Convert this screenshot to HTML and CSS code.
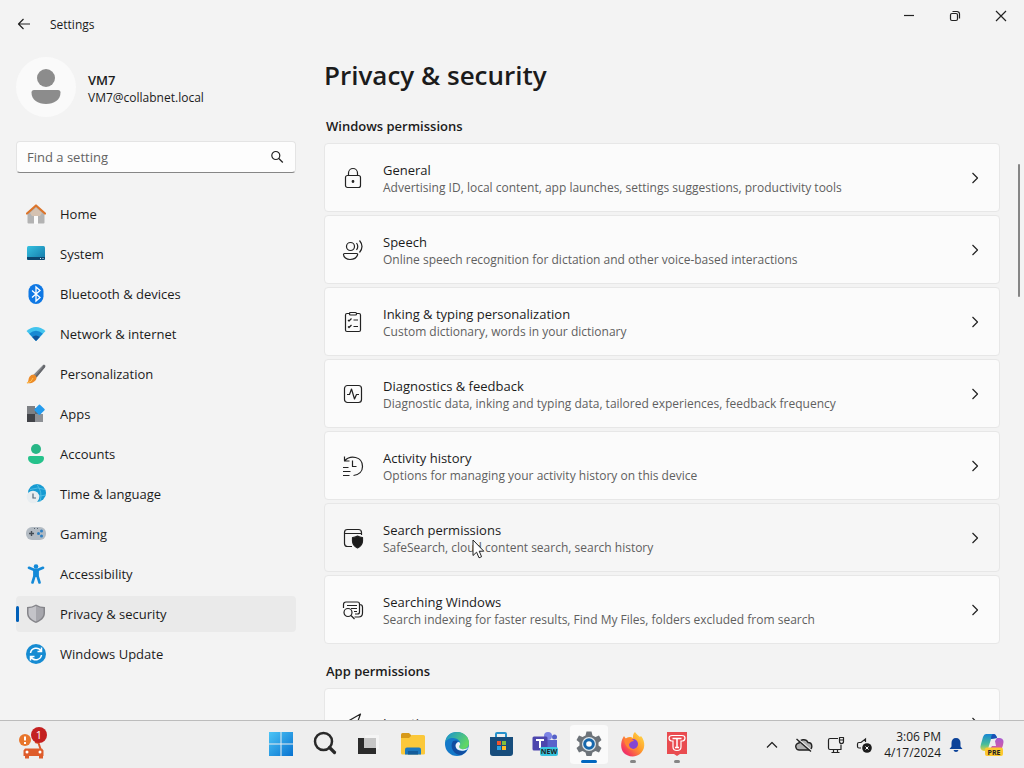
FILE: index.html
```html
<!DOCTYPE html>
<html lang="en">
<head>
<meta charset="UTF-8" />
<meta name="viewport" content="width=device-width, initial-scale=1" />
<title>Settings</title>
<link rel="stylesheet" href="styles.css">
</head>
<body>

<header class="titlebar">
  <button class="back" aria-label="Back">
    <svg width="16" height="16" viewBox="0 0 16 16" class="line"><path d="M14 8H2.500M7.500 3l-5 5 5 5"/></svg>
  </button>
  <span class="app-name">Settings</span>
  <div class="window-buttons">
    <button aria-label="Minimize"><svg width="12" height="12" viewBox="0 0 12 12" class="line"><path d="M1 5.500h10"/></svg></button>
    <button aria-label="Restore"><svg width="12" height="12" viewBox="0 0 12 12" class="line"><rect x="1.500" y="3.500" width="7" height="7" rx="1.500"/><path d="M3.500 1.500H8a2.500 2.500 0 0 1 2.500 2.500v4.500"/></svg></button>
    <button aria-label="Close"><svg width="12" height="12" viewBox="0 0 12 12" class="line"><path d="M1 1l10 10M11 1L1 11"/></svg></button>
  </div>
</header>

<div class="window">
  <aside class="sidebar">
    <div class="profile">
      <div class="avatar">
        <svg width="60" height="60" viewBox="0 0 60 60"><circle cx="30" cy="21" r="9" fill="#8c8c8c"/><path d="M18 33h24q2.500 0 2.500 2.500C44.500 43 38 47 30 47s-14.500-4-14.500-11.500Q15.500 33 18 33z" fill="#8c8c8c"/></svg>
      </div>
      <div class="user">
        <div class="user-name">VM7</div>
        <div class="user-mail">VM7@collabnet.local</div>
      </div>
    </div>

    <div class="search">
      <input type="text" id="find" placeholder="Find a setting" aria-label="Find a setting" />
      <svg width="14" height="14" viewBox="0 0 14 14" class="line"><circle cx="5.800" cy="5.500" r="4"/><path d="M8.800 8.500l4 4"/></svg>
    </div>

    <nav class="nav">
      <a href="#home">
        <svg width="20" height="20" viewBox="0 0 20 20"><path d="M1.500 9L10 2l8.500 7v9.500a1 1 0 0 1-1 1H12v-6H8v6H2.500a1 1 0 0 1-1-1z" fill="#b3b3b3"/><path d="M4 9l6-5.500L16 9l-2 3H6z" fill="#d5c2b1"/><path d="M1 9.500L10 1.500l9 8" fill="none" stroke="#dc742a" stroke-width="2.200" stroke-linecap="round" stroke-linejoin="round"/><path d="M8 12h4v8H8z" fill="#fbfbfb"/></svg>
        Home
      </a>
      <a href="#system">
        <svg width="20" height="20" viewBox="0 0 20 20"><defs><linearGradient id="sys" x2="1" y2="1"><stop stop-color="#35c1e0"/><stop offset="1" stop-color="#1377a8"/></linearGradient></defs><rect x="1" y="2" width="18" height="14" rx="1.500" fill="url(#sys)"/><path d="M1 13h18v1.500q0 1.500-1.500 1.500h-15Q1 16 1 14.500z" fill="#0c4770"/><path d="M14 14.500h1M16.500 14.500h1" stroke="#dceffb"/></svg>
        System
      </a>
      <a href="#bluetooth">
        <svg width="20" height="20" viewBox="0 0 20 20"><rect x="2.500" width="15" height="20" rx="7.500" fill="#0f78e4"/><path d="M6 6.500l8 7-4 3.500V3l4 3.500-8 7" fill="none" stroke="#fff" stroke-width="1.300"/></svg>
        Bluetooth &amp; devices
      </a>
      <a href="#network">
        <svg width="20" height="20" viewBox="0 0 20 20"><path d="M.5 7q9.500-8 19 0L10.500 16.500q-.5.5-1 0z" fill="#42c4ee"/><path d="M3.200 9.700q6.800-5.700 13.600 0l-6.300 6.800q-.5.5-1 0z" fill="#1789d3"/><path d="M6.200 12.900q3.800-3 7.600 0l-3.300 3.600q-.5.5-1 0z" fill="#10549b"/></svg>
        Network &amp; internet
      </a>
      <a href="#personalization">
        <svg width="20" height="20" viewBox="0 0 20 20"><path d="M18.500.7q1.500.8.500 2.500l-8.500 10.300-3-2.800L17 1q.8-.8 1.500-.3z" fill="#85888d"/><path d="M16 4l1.500-3q2.500 0 1.500 2.200l-8.500 10.300-1.500-1.300z" fill="#65676c"/><path d="M7.500 10.500q2.800.6 3 3.500C10 18 5 20 .5 19c2.500-1 1.500-4 3-6.300q1.600-2.200 4-2.200z" fill="#ed8b27"/><path d="M1 19q5-1 6-5" fill="none" stroke="#ffc252"/></svg>
        Personalization
      </a>
      <a href="#apps">
        <svg width="20" height="20" viewBox="0 0 20 20"><path d="M1 2h8v8H1z" fill="#7d8084"/><path d="M1 10h8v8H1z" fill="#414348"/><path d="M9 10h8v8H9z" fill="#8d9095"/><path d="M9 4h6v6H9z" fill="#65686c"/><path d="M14 .7l4.500 4.300q.6.600 0 1.200L14 10.700q-.6.600-1.200 0L8.600 6.500q-.5-.7 0-1.300L12.900.7q.5-.5 1.100 0z" fill="#249bed"/></svg>
        Apps
      </a>
      <a href="#accounts">
        <svg width="20" height="20" viewBox="0 0 20 20"><circle cx="10" cy="5" r="5" fill="#27b686"/><path d="M4 12h12q2 0 2 2c0 4-4 6-8 6s-8-2-8-6q0-2 2-2z" fill="#25c28b"/></svg>
        Accounts
      </a>
      <a href="#time">
        <svg width="20" height="20" viewBox="0 0 20 20"><circle cx="11" cy="9" r="9" fill="#179bd2"/><path d="M4 5.500q8-3 15 0M12 12q4 0 7.500-1M11 .5q6 8 3 17" fill="none" stroke="#5cc4e8" stroke-width=".8"/><circle cx="7" cy="13" r="6.300" fill="#e8edf0"/><path d="M7 9.500V14h3" fill="none" stroke="#536779" stroke-width="1.200"/></svg>
        Time &amp; language
      </a>
      <a href="#gaming">
        <svg width="20" height="20" viewBox="0 0 20 20"><rect y="3" width="20" height="13" rx="6" fill="#b3bbc3"/><path d="M5.500 7v5M3 9.500h5" stroke="#444c55" stroke-width="1.400"/><g fill="#2f7fc1"><circle cx="15.500" cy="7" r="1.500"/><circle cx="12.500" cy="9.500" r="1.500"/><circle cx="15.500" cy="12" r="1.500"/></g><path d="M8 4.500h1M11 4.500h1" stroke="#59636f"/></svg>
        Gaming
      </a>
      <a href="#accessibility">
        <svg width="20" height="20" viewBox="0 0 20 20"><circle cx="10" cy="2.500" r="2.300" fill="#1389d8"/><path d="M3 3.800l4.800 2h4.400l4.800-2M6.500 18.500L8.500 12V6M13.500 18.500L11.500 12V6" fill="none" stroke="#1389d8" stroke-width="2.600" stroke-linecap="round" stroke-linejoin="round"/><path d="M7.500 6h5v7h-5z" fill="#1389d8"/></svg>
        Accessibility
      </a>
      <a href="#privacy" class="selected" aria-current="page">
        <svg width="20" height="20" viewBox="0 0 20 20"><path d="M10 .5q4 2.500 9 2.500v6c0 5-4 8-9 10-5-2-9-5-9-10V3q5 0 9-2.500z" fill="#85858a"/><path d="M10 2Q6.500 4 2.500 4.300V9c0 4 3.200 6.700 7.500 8.500z" fill="#c4c4c9"/><path d="M10 2q3.500 2 7.500 2.300V9c0 4-3.200 6.700-7.500 8.500z" fill="#a7a7ad"/></svg>
        Privacy &amp; security
      </a>
      <a href="#update">
        <svg width="20" height="20" viewBox="0 0 20 20"><circle cx="10" cy="10" r="10" fill="#168bd2"/><path d="M4.500 9a5.700 5.700 0 0 1 10.500-2M15.500 11A5.700 5.700 0 0 1 5 13M15.500 3.500V7.500h-4M4.500 16.500v-4h4" fill="none" stroke="#fff" stroke-width="1.500"/></svg>
        Windows Update
      </a>
    </nav>
  </aside>

  <main class="content">
    <h1>Privacy &amp; security</h1>

    <h2>Windows permissions</h2>
    <div class="cards">
      <a class="card" href="#general">
        <svg class="card-icon line" width="22" height="22" viewBox="0 0 22 22"><rect x="3.500" y="8.500" width="15" height="12" rx="2"/><path d="M6.500 8.500V6a4.500 4.500 0 0 1 9 0v2.500"/><circle cx="11" cy="14.500" r=".8" fill="#222"/></svg>
        <span class="card-text"><span class="card-title">General</span><span class="card-info">Advertising ID, local content, app launches, settings suggestions, productivity tools</span></span>
        <svg class="chevron line" width="12" height="12" viewBox="0 0 12 12"><path d="M3.500 1l5 5-5 5"/></svg>
      </a>
      <a class="card" href="#speech">
        <svg class="card-icon line" width="22" height="22" viewBox="0 0 22 22"><circle cx="8.500" cy="7.500" r="4"/><path d="M2.500 14.500h12q1.500 0 1 1.500c-1 3-4 4.500-7.500 4.500S1.500 18 1.500 15.500q0-1 1-1z"/><path d="M14.500 4q2.500 3.500 0 7M17.500 1.500q5 6 0 12"/></svg>
        <span class="card-text"><span class="card-title">Speech</span><span class="card-info">Online speech recognition for dictation and other voice-based interactions</span></span>
        <svg class="chevron line" width="12" height="12" viewBox="0 0 12 12"><path d="M3.500 1l5 5-5 5"/></svg>
      </a>
      <a class="card" href="#inking">
        <svg class="card-icon line" width="22" height="22" viewBox="0 0 22 22"><rect x="3.500" y="2.500" width="15" height="18" rx="1.500"/><rect x="7.500" y="1.500" width="7" height="2.500" rx="1" fill="#fbfbfb"/><path d="M6 9l1 1 2.500-2.500M6 15.500l1 1L9.500 14M11.500 9h4.500M11.500 15.500h4.500"/></svg>
        <span class="card-text"><span class="card-title">Inking &amp; typing personalization</span><span class="card-info">Custom dictionary, words in your dictionary</span></span>
        <svg class="chevron line" width="12" height="12" viewBox="0 0 12 12"><path d="M3.500 1l5 5-5 5"/></svg>
      </a>
      <a class="card" href="#diagnostics">
        <svg class="card-icon line" width="22" height="22" viewBox="0 0 22 22"><rect x="2.500" y="2.500" width="17" height="17" rx="3"/><path d="M5 11.500h2.500L9.500 6l3 10 2-4.500H17"/></svg>
        <span class="card-text"><span class="card-title">Diagnostics &amp; feedback</span><span class="card-info">Diagnostic data, inking and typing data, tailored experiences, feedback frequency</span></span>
        <svg class="chevron line" width="12" height="12" viewBox="0 0 12 12"><path d="M3.500 1l5 5-5 5"/></svg>
      </a>
      <a class="card" href="#activity">
        <svg class="card-icon line" width="22" height="22" viewBox="0 0 22 22"><path d="M2.500 1.500V6H7.500M3 5.500C8 0 20.500 1 20.500 11.500c0 5-3.500 8.500-9 9M10.500 5.500v6h4M1 12.500h5.500M1 16.500h7.500M1 20.500h6.500"/></svg>
        <span class="card-text"><span class="card-title">Activity history</span><span class="card-info">Options for managing your activity history on this device</span></span>
        <svg class="chevron line" width="12" height="12" viewBox="0 0 12 12"><path d="M3.500 1l5 5-5 5"/></svg>
      </a>
      <a class="card hovered" href="#search-permissions">
        <svg class="card-icon line" width="22" height="22" viewBox="0 0 22 22"><path d="M10 19.500H5.500q-3 0-3-3v-11q0-3 3-3h11q3 0 3 3V8M2.500 6.500h17"/><path d="M15.500 9q2.500 1.500 5 1.500V14c0 3.500-2 5.500-5 7-3-1.500-5-3.500-5-7v-3.500Q13 10.500 15.500 9z" fill="#1b1b1b"/></svg>
        <span class="card-text"><span class="card-title">Search permissions</span><span class="card-info">SafeSearch, cloud content search, search history</span>
          <svg class="pointer" width="13" height="20" viewBox="0 0 13 20"><path d="M1 1v15.500l3.600-3.300 2.400 5.600 2.600-1.100-2.400-5.500h4.600z" fill="#fff" stroke="#222"/></svg>
        </span>
        <svg class="chevron line" width="12" height="12" viewBox="0 0 12 12"><path d="M3.500 1l5 5-5 5"/></svg>
      </a>
      <a class="card" href="#searching">
        <svg class="card-icon line" width="22" height="22" viewBox="0 0 22 22"><path d="M1.500 9V5.500q0-2.500 2.500-2.500h11.500q2 0 2 2V13q0 2-2 2H13M17.500 5.500q3 0 3 2.500v6q0 4-4 4h-4M5 6.500h10M9 9.500h6M12 12.500h3"/><circle cx="6" cy="13.500" r="4"/><path d="M9 16.500l3.500 3.500"/></svg>
        <span class="card-text"><span class="card-title">Searching Windows</span><span class="card-info">Search indexing for faster results, Find My Files, folders excluded from search</span></span>
        <svg class="chevron line" width="12" height="12" viewBox="0 0 12 12"><path d="M3.500 1l5 5-5 5"/></svg>
      </a>
    </div>

    <h2>App permissions</h2>
    <div class="cards">
      <a class="card" href="#location">
        <svg class="card-icon line" width="22" height="22" viewBox="0 0 22 22"><path d="M18.500 2L2 11.500l7.500 1.500L12 20z"/></svg>
        <span class="card-text"><span class="card-title">Location</span></span>
        <svg class="chevron line" width="12" height="12" viewBox="0 0 12 12"><path d="M3.500 1l5 5-5 5"/></svg>
      </a>
    </div>
    <div class="scroll-thumb"></div>
  </main>
</div>

<footer class="taskbar">
  <div class="widgets">
    <button aria-label="Traffic alert">
      <svg width="28" height="30" viewBox="0 0 28 30"><circle cx="7" cy="10" r="6" fill="#e8762c"/><path d="M7 6.500v4M7 12v2" stroke="#fff" stroke-width="2"/><path d="M17 12l3.500 1 2 6" fill="none" stroke="#d9572a" stroke-width="2"/><path d="M7 18.500h17l1.500 2v5.500H25v2.500h-4V26H11v2.500H7V26H5.500v-5.500z" fill="#de5c2b"/><circle cx="9" cy="22" r="1.500" fill="#fff"/><circle cx="22" cy="22" r="1.500" fill="#fff"/></svg>
      <span class="badge">1</span>
    </button>
  </div>
  <div class="apps">
    <button aria-label="Start">
      <svg width="28" height="28" viewBox="0 0 28 28"><defs><linearGradient id="win" x2="1" y2="1"><stop stop-color="#4cc5f6"/><stop offset="1" stop-color="#0872d0"/></linearGradient></defs><path d="M2 2h11.500v11.500H2zM14.500 2H26v11.500H14.500zM2 14.500h11.500V26H2zM14.500 14.500H26V26H14.500z" fill="url(#win)"/></svg>
    </button>
    <button aria-label="Search">
      <svg width="28" height="28" viewBox="0 0 28 28" fill="none" stroke="#292929"><circle cx="12.500" cy="11.500" r="8.500" fill="#eee" stroke-width="2.500"/><path d="M18.500 17.500l5 5" stroke-width="3.200" stroke-linecap="round"/></svg>
    </button>
    <button aria-label="Task view">
      <svg width="28" height="28" viewBox="0 0 28 28"><path d="M10 5h14v14H10z" fill="#f5f5f5"/><path d="M3 8h18v16H3z" fill="#2b2b2b"/><path d="M9 8h12v10H9z" fill="#c6c6c6"/></svg>
    </button>
    <button aria-label="File Explorer">
      <svg width="28" height="28" viewBox="0 0 28 28"><path d="M2 4.500Q2 3 3.500 3H10l3 3-3 4H2z" fill="#d79919"/><path d="M2 8h8l3-3h11.500Q26 5 26 6.500v17q0 1-1.500 1h-21Q2 24.500 2 23z" fill="#fbc83a"/><path d="M6 24.500v-5q0-2 2-2h12q2 0 2 2v5z" fill="#1c78be"/><path d="M9 21h10v3.500H9z" fill="#135c9b"/></svg>
    </button>
    <button aria-label="Edge">
      <svg width="28" height="28" viewBox="0 0 28 28"><defs><linearGradient id="edge" y2=".5"><stop stop-color="#168fd5"/><stop offset="1" stop-color="#61d765"/></linearGradient></defs><circle cx="14" cy="14" r="12" fill="#1479c9"/><path d="M2 13C3 5 8 2 14 2c8 0 12 6 12 11 0 4-3 6-6 6-4 0-5-2-3.500-3.500C19 12 15 8 10 8c-4 0-7 2-8 5z" fill="url(#edge)"/><path d="M10 11c-4 6 1 14 8 14 3-1 5-3 6-5-6 3-12 0-11-5 0-2 1-3 2-4q-2-1-5 0z" fill="#114da0"/><path d="M16.500 15.500c1-1 1-2.500-.5-3.500-2 0-3.500 2-3.500 3.500 0 4 5 7 11.500 4l1.500-2.500c-2 2-5 2.500-7 2-2-.5-3-2-2-3.500z" fill="#eff4f7"/></svg>
    </button>
    <button aria-label="Microsoft Store">
      <svg width="28" height="28" viewBox="0 0 28 28"><path d="M9 8V4q0-1 1-1h8q1 0 1 1v4" fill="none" stroke="#2591cc" stroke-width="2"/><path d="M3 7h23v16q0 3-3 3H6q-3 0-3-3z" fill="#174d7c"/><path d="M10 11h4v4h-4z" fill="#f1562c"/><path d="M15 11h4v4h-4z" fill="#80be3c"/><path d="M10 16h4v4h-4z" fill="#28a5e8"/><path d="M15 16h4v4h-4z" fill="#fdbc27"/></svg>
    </button>
    <button aria-label="Teams">
      <svg width="28" height="28" viewBox="0 0 28 28"><circle cx="17" cy="6" r="4" fill="#7c83e4"/><circle cx="23.500" cy="7" r="2.500" fill="#5560c8"/><path d="M11 10h15v8q-1 6-8 6-6-1-7-6z" fill="#5962ca"/><rect x="1.500" y="6.500" width="15" height="14" rx="1.500" fill="#4c45ad"/><path d="M5 10h8M9 10v8" stroke="#fff" stroke-width="2"/><rect x="9" y="17" width="18" height="9" rx="2" fill="#37c4df"/><text x="18" y="24" text-anchor="middle" class="icon-text">NEW</text></svg>
    </button>
    <button aria-label="Settings" class="active running">
      <svg width="28" height="28" viewBox="0 0 28 28"><path d="M11.500 1.500h5l1 4 3 1.500L24 5.500l2.500 4.500-3 2.500v3l3 2.500-2.500 4.500-3.500-1.500-3 1.500-1 3.500h-5l-1-3.500-3-1.500L4 22.500 1.500 18l3-2.500v-3l-3-2.500L4 5.500 7.500 7l3-1.500z" fill="#6d7379"/><circle cx="14" cy="14" r="7" fill="#dfe7ec"/><circle cx="14" cy="14" r="5.800" fill="#1767ac"/><circle cx="14" cy="14" r="2.800" fill="#fff"/></svg>
    </button>
    <button aria-label="Firefox" class="running">
      <svg width="28" height="28" viewBox="0 0 28 28"><defs><linearGradient id="fox" x1="1" x2="0" y2="1"><stop stop-color="#ffe64b"/><stop offset=".45" stop-color="#ff9b2c"/><stop offset=".8" stop-color="#f5385e"/><stop offset="1" stop-color="#d62a8d"/></linearGradient></defs><path d="M16 2c1 2 3 3 5 5l1-1c5 6 4 14-1 18-5 4-13 3-17-2C1 17 2 10 5 6l2 3c1-2 3-2 5-2l2 1c0-3 0-4 2-6z" fill="url(#fox)"/><circle cx="14" cy="14" r="5" fill="#8546d4"/><path d="M5 9c4-2 8-1 10 2-4 0-4 3-5 3 0 5 6 7 10 3-3 6-14 4-15-8z" fill="#ff8533"/></svg>
    </button>
    <button aria-label="Typing Pad" class="running">
      <svg width="28" height="28" viewBox="0 0 28 28"><path d="M4 2h20v22h-7l-3 2-3-2H4z" fill="#e94c50"/><path d="M9 5.500h10q3 0 3 2.500t-2.500 3H18v6q0 3.500-4 3.500t-4-3.500v-6H8.500Q6 10.500 6 8t3-2.500z" fill="none" stroke="#fff" stroke-width="1.200"/><path d="M9.500 8.500h9M14 8.500v9M12 17.500h4" stroke="#fff" stroke-width="1.500"/></svg>
    </button>
  </div>
  <div class="tray">
    <button class="tray-button" aria-label="Show hidden icons"><svg width="14" height="14" viewBox="0 0 14 14" class="line"><path d="M2 9.500l5-5 5 5"/></svg></button>
    <button class="tray-button" aria-label="OneDrive"><svg width="18" height="16" viewBox="0 0 18 16"><path d="M4.500 13A3.500 3.500 0 0 1 4 6c.5-3.500 7-5 9-.5 5 0 5 7.500.5 7.500z" fill="#b0b0b0" stroke="#222" stroke-width="1.400"/><path d="M2.500 1.500l14 12" stroke="#eee" stroke-width="1.500"/><path d="M1.500 2l14.500 12.500" stroke="#222" stroke-width="1.400"/></svg></button>
    <button class="tray-button" aria-label="Network"><svg width="18" height="18" viewBox="0 0 18 18" class="line"><path d="M11 2.500H3Q1.500 2.500 1.500 4v8q0 1.500 1.500 1.500h11V8.500M6.500 13.500v3M10.500 13.500v3M4.500 16.500h8"/><path d="M12.500 1.500h4v4q0 2-2 2t-2-2zM12.500 4h4"/></svg></button>
    <button class="tray-button narrow" aria-label="Volume muted"><svg width="16" height="16" viewBox="0 0 16 16"><path d="M9.500 5V2L5 5.500H3Q1.500 5.500 1.500 7v2.500Q1.500 11 3 11h2" fill="none" stroke="#222" stroke-width="1.200"/><circle cx="11" cy="11" r="4.800" fill="#1b1b1b"/><path d="M9.500 9.500l3 3M12.500 9.500l-3 3" stroke="#fff"/></svg></button>
    <button class="clock"><span>3:06 PM</span><span>4/17/2024</span></button>
    <button class="tray-button narrow" aria-label="Notifications"><svg width="14" height="16" viewBox="0 0 14 16"><path d="M7 1c3 0 4.500 2 4.500 5v3.500L13.500 12H.5l2-2.500V6C2.500 3 4 1 7 1zM4.500 13h5Q9 15 7 15t-2.500-2z" fill="#0c4399"/></svg></button>
    <button class="copilot" aria-label="Copilot"><svg width="26" height="26" viewBox="0 0 26 26"><defs><linearGradient id="cop1" y2="1" x2="0"><stop stop-color="#1786d3"/><stop offset=".6" stop-color="#48bd9a"/><stop offset="1" stop-color="#e5d43f"/></linearGradient><linearGradient id="cop2" y2="1" x2="0"><stop stop-color="#a75bd2"/><stop offset="1" stop-color="#f25b83"/></linearGradient></defs><path d="M7 2h8q2 0 3 4l-6 1-3 10q-1 2-4 2-5-1-3-7l2-7q1-3 3-3z" fill="url(#cop1)"/><path d="M14 2q3 0 4 4l-6 1q0-4 2-5z" fill="#1a50b5"/><path d="M16 9l2-3h3q5 1 3 7l-2 6q-1 4-5 4h-6q-2 0-2-3l4-6h4z" fill="url(#cop2)"/><rect x="6" y="15.500" width="18" height="8.500" rx="2" fill="#fdc82f"/><text x="15" y="22.500" text-anchor="middle" class="icon-text">PRE</text></svg></button>
  </div>
</footer>

</body>
</html>
```
FILE: styles.css
```css
* {
  box-sizing: border-box;
}
body {
  display: flex;
  flex-direction: column;
  height: 100vh;
  margin: 0;
  overflow: hidden;
  background: #f3f3f3;
  color: #1b1b1b;
  font-family: "Open Sans", "Noto Sans", sans-serif;
  font-size: 13px;
  line-height: 20px;
}
a {
  color: inherit;
  text-decoration: none;
}
button {
  display: flex;
  align-items: center;
  justify-content: center;
  padding: 0;
  border: 0;
  background: none;
  color: inherit;
  font: inherit;
}
svg {
  display: block;
  flex: none;
}
.line {
  fill: none;
  stroke: #222;
  stroke-width: 1.2;
  stroke-linejoin: round;
}

/* title bar */
.titlebar {
  display: flex;
  flex: none;
  height: 48px;
}
.back {
  width: 48px;
  height: 48px;
}
.app-name {
  padding-left: 2px;
  font-size: 12px;
  line-height: 50px;
}
.window-buttons {
  display: flex;
  margin-left: auto;
}
.window-buttons button {
  width: 46px;
  height: 32px;
}

.window {
  display: flex;
  flex: 1;
  min-height: 0;
}

/* sidebar */
.sidebar {
  flex: none;
  width: 296px;
  padding: 9px 0 0 16px;
}
.profile {
  display: flex;
  align-items: center;
  gap: 12px;
}
.avatar {
  width: 60px;
  height: 60px;
  border-radius: 50%;
  background: #fafafa;
}
.user {
  padding-top: 4px;
  line-height: 18px;
}
.user-name {
  font-weight: 600;
}
.user-mail {
  font-size: 12px;
}
.search {
  display: flex;
  align-items: center;
  height: 32px;
  margin: 24px 0 23px;
  padding: 0 11px 0 10px;
  border: 1px solid #e4e4e4;
  border-bottom-color: #868686;
  border-radius: 4px;
  background: #fdfdfd;
}
.search input {
  flex: 1;
  min-width: 0;
  padding: 0;
  border: 0;
  outline: 0;
  background: none;
  font: inherit;
}
.search input::placeholder {
  color: #636363;
}
.nav {
  display: flex;
  flex-direction: column;
  gap: 4px;
}
.nav a {
  display: flex;
  align-items: center;
  gap: 14px;
  height: 36px;
  padding-left: 10px;
  border-radius: 4px;
}
.nav .selected {
  position: relative;
  background: #eaeaea;
}
.nav .selected::before {
  content: "";
  position: absolute;
  left: 0;
  top: 10px;
  width: 3px;
  height: 16px;
  border-radius: 2px;
  background: #005fb8;
}

/* settings list */
.content {
  position: relative;
  flex: 1;
  min-width: 0;
  padding: 9px 24px 0 28px;
  overflow: hidden;
}
h1 {
  margin: 0;
  font-size: 26px;
  font-weight: 600;
  line-height: 36px;
}
h2 {
  margin: 23px 2px 7px;
  font-size: 13px;
  font-weight: 600;
  line-height: 20px;
}
.cards {
  display: flex;
  flex-direction: column;
  gap: 3px;
}
.cards + h2 {
  margin-top: 17px;
}
.card {
  display: flex;
  align-items: center;
  height: 69px;
  padding: 0 18px 0 17px;
  border: 1px solid #e7e7e7;
  border-radius: 4px;
  background: #fbfbfb;
}
.card.hovered {
  background: #f6f6f6;
}
.card-text {
  position: relative;
  display: flex;
  flex: 1;
  flex-direction: column;
  padding-left: 19px;
  white-space: nowrap;
}
.card-title {
  line-height: 20px;
}
.card-info {
  color: #5f5f5f;
  font-size: 12px;
  line-height: 16px;
}
.pointer {
  position: absolute;
  left: 108px;
  top: 19px;
}
.scroll-thumb {
  position: absolute;
  right: 4px;
  top: 116px;
  width: 2px;
  height: 133px;
  border-radius: 1px;
  background: #858585;
}

/* taskbar */
.taskbar {
  display: flex;
  flex: none;
  height: 48px;
  border-top: 1px solid #bcbcbc;
  background: #eee;
}
.widgets {
  display: flex;
  width: 259px;
  padding-left: 10px;
}
.widgets button {
  position: relative;
  width: 44px;
}
.badge {
  position: absolute;
  left: 21px;
  top: 6px;
  width: 16px;
  height: 16px;
  border-radius: 50%;
  background: #c42020;
  color: #fff;
  font-size: 11px;
  line-height: 16px;
}
.apps {
  display: flex;
}
.apps button {
  position: relative;
  width: 44px;
}
.apps svg {
  margin-bottom: 1px;
}
.apps .active {
  padding: 4px 3px;
  border-radius: 7px;
  background: #fafafa content-box;
}
.running::after {
  content: "";
  position: absolute;
  bottom: 5px;
  left: 19px;
  width: 6px;
  height: 3px;
  border-radius: 2px;
  background: #858585;
}
.active::after {
  left: 14px;
  width: 16px;
  background: #0067c0;
}
.icon-text {
  font: bold 7px "Open Sans", sans-serif;
  fill: #222;
}
.tray {
  display: flex;
  margin-left: auto;
  padding-right: 8px;
}
.tray-button {
  width: 32px;
}
.tray-button.narrow {
  width: 24px;
}
.clock {
  flex-direction: column;
  align-items: flex-end;
  padding: 0 3px 0 8px;
  font-size: 12px;
  line-height: 16px;
}
.copilot {
  width: 48px;
}
```
